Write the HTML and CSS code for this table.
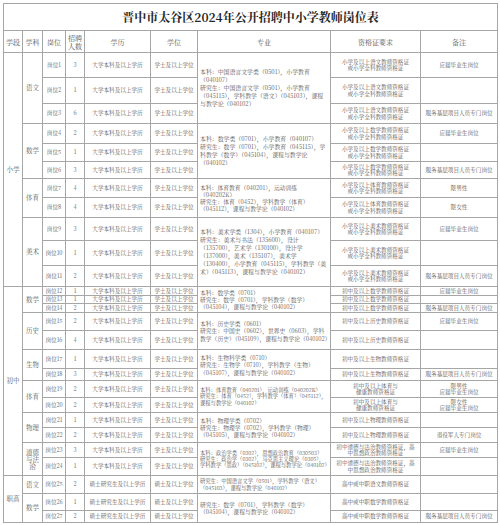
FILE: index.html
```html
<!DOCTYPE html>
<html lang="zh">
<head>
<meta charset="utf-8">
<title>晋中市太谷区2024年公开招聘中小学教师岗位表</title>
<link rel="stylesheet" href="styles.css">
</head>
<body>
<div class="page">
<table class="jobs">
<colgroup>
<col class="c-stage"><col class="c-subj"><col class="c-post"><col class="c-num"><col class="c-edu"><col class="c-deg"><col class="c-major"><col class="c-cert"><col class="c-note">
</colgroup>
<thead>
<tr class="title"><th colspan="9">晋中市太谷区2024年公开招聘中小学教师岗位表</th></tr>
<tr class="head"><th>学段</th><th>学科</th><th>岗位</th><th>招聘<br>人数</th><th>学历</th><th>学位</th><th>专业</th><th>资格证要求</th><th>备注</th></tr>
</thead>
<tbody>
<tr class="h25"><td rowspan="11" class="lab">小学</td><td rowspan="3" class="lab">语文</td><td>岗位1</td><td>3</td><td>大学本科及以上学历</td><td>学士及以上学位</td><td rowspan="3" class="major roomy">本科：中国语言文学类（0501），小学教育（040107）<br>研究生：中国语言文学（0501），小学教育（045115），学科教学（语文）（045103），课程与教学论（040102）</td><td>小学及以上语文教师资格证<br>或小学全科教师资格证</td><td>应届毕业生岗位</td></tr>
<tr class="h26"><td>岗位2</td><td>1</td><td>大学本科及以上学历</td><td>学士及以上学位</td><td>小学及以上语文教师资格证<br>或小学全科教师资格证</td><td></td></tr>
<tr class="h20"><td>岗位3</td><td>6</td><td>大学本科及以上学历</td><td>学士及以上学位</td><td>小学及以上语文教师资格证<br>或小学全科教师资格证</td><td>服务基层项目人员专门岗位</td></tr>
<tr class="h20"><td rowspan="3" class="lab">数学</td><td>岗位4</td><td>2</td><td>大学本科及以上学历</td><td>学士及以上学位</td><td rowspan="3" class="major roomy">本科：数学类（0701），小学教育（040107）<br>研究生：数学（0701），小学教育（045115），学科教学（数学）（045104），课程与教学论（040102）</td><td>小学及以上数学教师资格证<br>或小学全科教师资格证</td><td>应届毕业生岗位</td></tr>
<tr class="h18"><td>岗位5</td><td>1</td><td>大学本科及以上学历</td><td>学士及以上学位</td><td>小学及以上数学教师资格证<br>或小学全科教师资格证</td><td></td></tr>
<tr class="h17"><td>岗位6</td><td>3</td><td>大学本科及以上学历</td><td>学士及以上学位</td><td>小学及以上数学教师资格证<br>或小学全科教师资格证</td><td>服务基层项目人员专门岗位</td></tr>
<tr class="h19"><td rowspan="2" class="lab">体育</td><td>岗位7</td><td>4</td><td>大学本科及以上学历</td><td>学士及以上学位</td><td rowspan="2" class="major mid">本科：体育教育（040201），运动训练（040202K）<br>研究生：体育（0452），学科教学（体育）（045112），课程与教学论（040102）</td><td>小学及以上体育教师资格证<br>或小学全科教师资格证</td><td>限男性</td></tr>
<tr class="h20"><td>岗位8</td><td>4</td><td>大学本科及以上学历</td><td>学士及以上学位</td><td>小学及以上体育教师资格证<br>或小学全科教师资格证</td><td>限女性</td></tr>
<tr class="h23"><td rowspan="3" class="lab">美术</td><td>岗位9</td><td>3</td><td>大学本科及以上学历</td><td>学士及以上学位</td><td rowspan="3" class="major roomy">本科：美术学类（1304），小学教育（040107）<br>研究生：美术与书法（135600），设计（135700），艺术学（130100），设计学（137000），美术（135107），美术学（130400），小学教育（045115），学科教学（美术）（045113），课程与教学论（040102）</td><td>小学及以上美术教师资格证<br>或小学全科教师资格证</td><td>应届毕业生岗位</td></tr>
<tr class="h25"><td>岗位10</td><td>1</td><td>大学本科及以上学历</td><td>学士及以上学位</td><td>小学及以上美术教师资格证<br>或小学全科教师资格证</td><td></td></tr>
<tr class="h21"><td>岗位11</td><td>2</td><td>大学本科及以上学历</td><td>学士及以上学位</td><td>小学及以上美术教师资格证<br>或小学全科教师资格证</td><td>服务基层项目人员专门岗位</td></tr>

<tr class="h9"><td rowspan="13" class="lab">初中</td><td rowspan="3" class="lab">数学</td><td>岗位12</td><td>1</td><td>大学本科及以上学历</td><td>学士及以上学位</td><td rowspan="3" class="major mid">本科：数学类（0701）<br>研究生：数学（0701），学科教学（数学）（045104），课程与教学论（040102）</td><td>初中及以上数学教师资格证</td><td>应届毕业生岗位</td></tr>
<tr class="h8"><td>岗位13</td><td>1</td><td>大学本科及以上学历</td><td>学士及以上学位</td><td>初中及以上数学教师资格证</td><td></td></tr>
<tr class="h9"><td>岗位14</td><td>2</td><td>大学本科及以上学历</td><td>学士及以上学位</td><td>初中及以上数学教师资格证</td><td>服务基层项目人员专门岗位</td></tr>
<tr class="h18"><td rowspan="2" class="lab">历史</td><td>岗位15</td><td>2</td><td>大学本科及以上学历</td><td>学士及以上学位</td><td rowspan="2" class="major mid">本科：历史学类（0601）<br>研究生：中国史（0602），世界史（0603），学科教学（历史）（045109），课程与教学论（040102）</td><td>初中及以上历史教师资格证</td><td>应届毕业生岗位</td></tr>
<tr class="h19"><td>岗位16</td><td>4</td><td>大学本科及以上学历</td><td>学士及以上学位</td><td>初中及以上历史教师资格证</td><td></td></tr>
<tr class="h19"><td rowspan="2" class="lab">生物</td><td>岗位17</td><td>1</td><td>大学本科及以上学历</td><td>学士及以上学位</td><td rowspan="2" class="major mid">本科：生物科学类（0710）<br>研究生：生物学（0710），学科教学（生物）（045107），课程与教学论（040102）</td><td>初中及以上生物教师资格证</td><td></td></tr>
<tr class="h12"><td>岗位18</td><td>3</td><td>大学本科及以上学历</td><td>学士及以上学位</td><td>初中及以上生物教师资格证</td><td>服务基层项目人员专门岗位</td></tr>
<tr class="h17"><td rowspan="2" class="lab">体育</td><td>岗位19</td><td>2</td><td>大学本科及以上学历</td><td>学士及以上学位</td><td rowspan="2" class="major">本科：体育教育（040201），运动训练（040202K）<br>研究生：体育（0452），学科教学（体育）（045112），课程与教学论（040102）</td><td>初中及以上体育与<br>健康教师资格证</td><td>限男性<br>应届毕业生岗位</td></tr>
<tr class="h15"><td>岗位20</td><td>2</td><td>大学本科及以上学历</td><td>学士及以上学位</td><td>初中及以上体育与<br>健康教师资格证</td><td>限女性<br>应届毕业生岗位</td></tr>
<tr class="h15"><td rowspan="2" class="lab">物理</td><td>岗位21</td><td>1</td><td>大学本科及以上学历</td><td>学士及以上学位</td><td rowspan="2" class="major mid">本科：物理学类（0702）<br>研究生：物理学（0702），学科教学（物理）（045105），课程与教学论（040102）</td><td>初中及以上物理教师资格证</td><td></td></tr>
<tr class="h15"><td>岗位22</td><td>2</td><td>大学本科及以上学历</td><td>学士及以上学位</td><td>初中及以上物理教师资格证</td><td>退役军人专门岗位</td></tr>
<tr class="h15"><td rowspan="2" class="lab tight">道德<br>与法<br>治</td><td>岗位23</td><td>3</td><td>大学本科及以上学历</td><td>学士及以上学位</td><td rowspan="2" class="major">本科：政治学类（0302），思想政治教育（030503）<br>研究生：政治学（0302），马克思主义理论（0305），学科教学（思政）（045102），课程与教学论（040102）</td><td>初中道德与法治教师资格证，高<br>中思想政治教师资格证</td><td>应届毕业生岗位</td></tr>
<tr class="h18"><td>岗位24</td><td>1</td><td>大学本科及以上学历</td><td>学士及以上学位</td><td>初中道德与法治教师资格证，高<br>中思想政治教师资格证</td><td></td></tr>

<tr class="h18"><td rowspan="3" class="lab">职高</td><td class="lab">语文</td><td>岗位25</td><td>2</td><td>硕士研究生及以上学历</td><td>硕士及以上学位</td><td class="major">研究生：中国语言文学（0501），学科教学（语文）（045103），课程与教学论（040102）</td><td>高中或中职语文教师资格证</td><td></td></tr>
<tr class="h17"><td rowspan="2" class="lab">数学</td><td>岗位26</td><td>1</td><td>硕士研究生及以上学历</td><td>硕士及以上学位</td><td rowspan="2" class="major mid">研究生：数学（0701），学科教学（数学）（045104），课程与教学论（040102）</td><td>高中或中职数学教师资格证</td><td></td></tr>
<tr class="h12"><td>岗位27</td><td>2</td><td>硕士研究生及以上学历</td><td>硕士及以上学位</td><td>高中或中职数学教师资格证</td><td>服务基层项目人员专门岗位</td></tr>
</tbody>
</table>
</div>
</body>
</html>
```
FILE: styles.css
```css
html, body {
  margin: 0;
  background: #ffffff;
}
.page {
  padding: 3px;
}
.jobs {
  border-collapse: collapse;
  table-layout: fixed;
  width: 494px;
  font-family: "Noto Serif CJK SC", "Noto Sans CJK SC", "Liberation Serif", serif;
  font-size: 5.6px;
  line-height: 6.5px;
  color: #5a5a5a;
}
.jobs td, .jobs th {
  border: 1px solid #a6a6a6;
  padding: 0;
  text-align: center;
  vertical-align: middle;
  font-weight: normal;
  overflow: hidden;
  white-space: normal;
}
.c-stage { width: 19px; }
.c-subj { width: 20px; }
.c-post { width: 23px; }
.c-num { width: 19px; }
.c-edu { width: 66px; }
.c-deg { width: 47px; }
.c-major { width: 133px; }
.c-cert { width: 90px; }
.c-note { width: 77px; }

.title th {
  height: 26px;
  font-size: 12px;
  line-height: 14px;
  font-weight: bold;
  color: #262626;
}
.head th {
  height: 21px;
  font-size: 7px;
  line-height: 8px;
  color: #555555;
}
.jobs td.lab {
  font-size: 6.5px;
  line-height: 7.5px;
}
.jobs td.tight {
  line-height: 7px;
}
.jobs td.major {
  text-align: left;
  padding: 0 1px 0 2px;
  font-size: 5.3px;
  line-height: 6.3px;
}
.jobs td.major.mid {
  font-size: 5.8px;
  line-height: 7.2px;
}
.jobs td.major.roomy {
  font-size: 5.9px;
  line-height: 8px;
}
.h8 { height: 8px; }
.h9 { height: 9px; }
.h12 { height: 12px; }
.h15 { height: 15px; }
.h17 { height: 17px; }
.h18 { height: 18px; }
.h19 { height: 19px; }
.h20 { height: 20px; }
.h21 { height: 21px; }
.h23 { height: 23px; }
.h25 { height: 25px; }
.h26 { height: 26px; }
```
